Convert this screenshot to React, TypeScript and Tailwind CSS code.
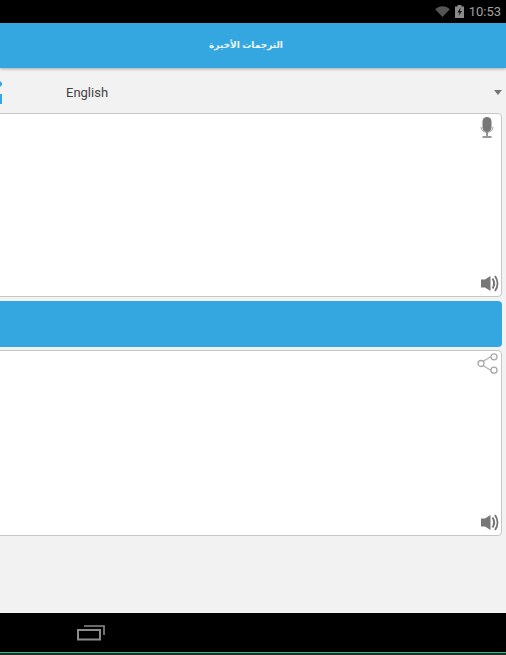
const Speaker = () => (
  <svg width="18" height="17" viewBox="0 0 18 17" className="block">
    <path d="M0 4.500h4L9.500 1v15L4 12.500H0z" fill="#777" />
    <path d="M11.500 3.500c2 3 2 7 0 10" stroke="#777" strokeWidth="2" fill="none" />
    <path d="M14 1c3.200 4.500 3.200 10.500 0 15" stroke="#777" strokeWidth="2" fill="none" />
  </svg>
);

const Mic = () => (
  <svg width="14" height="21" viewBox="0 0 14 21" className="block">
    <rect x="2.500" y="0" width="9" height="15" rx="4.500" fill="#777" />
    <path d="M1 10c0 7 12 7 12 0" stroke="#999" strokeWidth="1" fill="none" />
    <path d="M7 15v4M2.500 20h9" stroke="#777" strokeWidth="1.500" fill="none" />
  </svg>
);

const Share = () => (
  <svg width="21" height="21" viewBox="0 0 21 21" className="block">
    <path d="M5 9l10-6M5 12l10 6" stroke="#b0b0b0" strokeWidth="1.200" fill="none" />
    <circle cx="4" cy="10.500" r="3" fill="#fff" stroke="#a8a8a8" strokeWidth="1.300" />
    <circle cx="17" cy="3.800" r="3" fill="#fff" stroke="#a8a8a8" strokeWidth="1.300" />
    <circle cx="17" cy="17.200" r="3" fill="#fff" stroke="#a8a8a8" strokeWidth="1.300" />
  </svg>
);

export default function App() {
  return (
    <div className="flex h-[655px] w-[506px] flex-col overflow-hidden bg-[#f2f2f2] font-['Roboto','Noto_Sans',sans-serif]">
      <div className="flex h-[23px] shrink-0 items-center justify-end gap-[5px] bg-black pr-[5px]">
        <svg width="15" height="11" viewBox="0 0 16 12">
          <path d="M0 3.500C4.500-.8 11.500-.8 16 3.500L8 12z" fill="#555" />
        </svg>
        <svg width="9" height="13" viewBox="0 0 9 13">
          <path d="M0 1.500h2.500V0h4v1.500H9V13H0z" fill="#8a8a8a" />
          <path d="M5.500 2.500L2.500 7.500h2L3.500 11l3.500-5H5z" fill="#111" />
        </svg>
        <span className="text-[13px] leading-none text-[#a0a0a0]">10:53</span>
      </div>

      <div className="flex h-[45px] shrink-0 items-center justify-center bg-[#35a7e0] pb-[2px] pr-[14px] font-['Noto_Sans','DejaVu_Sans',sans-serif] text-[9px] font-bold text-[#eef8fd] shadow-[0_1px_3px_rgba(0,0,0,0.3)]">
        الترجمات الأخيرة
      </div>

      <div className="flex h-[45px] shrink-0 items-center pt-[4px]">
        <svg width="2" height="25" viewBox="0 0 2 25" className="mt-[-2px] shrink-0">
          <path d="M0 2l2 2v2l-2 2zM0 15h2v10H0z" fill="#35a7e0" />
        </svg>
        <span className="ml-[64px] text-[13px] text-[#444]">English</span>
        <span className="ml-auto mr-[4px] h-0 w-0 border-x-[4px] border-t-[5px] border-x-transparent border-t-[#777]" />
      </div>

      <div className="ml-[-6px] mr-[4px] flex h-[184px] shrink-0 flex-col items-end justify-between rounded-[4px] border border-[#c6c6c6] bg-white pb-[4px] pr-[2px] pt-[3px]">
        <div className="mr-[5px]"><Mic /></div>
        <Speaker />
      </div>

      <div className="ml-[-6px] mr-[4px] mt-[4px] h-[46px] shrink-0 rounded-[4px] bg-[#35a7e0]" />

      <div className="ml-[-6px] mr-[4px] mt-[3px] flex h-[186px] shrink-0 flex-col items-end justify-between rounded-[4px] border border-[#c6c6c6] bg-white pb-[4px] pr-[2px] pt-[2px]">
        <div className="mr-[1px]"><Share /></div>
        <Speaker />
      </div>

      <div className="mt-[77px] flex h-[39px] shrink-0 items-center bg-black pl-[77px]">
        <svg width="28" height="16" viewBox="0 0 28 16">
          <rect x="1" y="5" width="22" height="9.500" fill="none" stroke="#8c8c8c" strokeWidth="2" />
          <path d="M7 1h20v9" fill="none" stroke="#8c8c8c" strokeWidth="1.600" />
        </svg>
      </div>
      <div className="h-[1px] shrink-0 bg-[#1fc47c]" />
      <div className="h-[2px] shrink-0 bg-[#2a2a2a]" />
    </div>
  );
}
